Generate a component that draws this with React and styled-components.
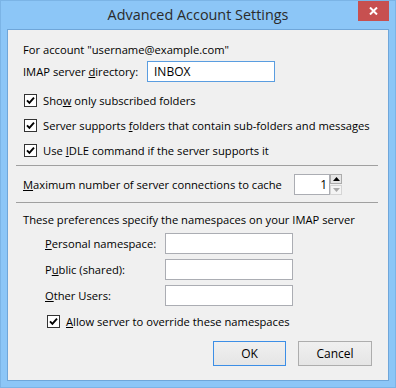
import React from "react";
import styled, { createGlobalStyle } from "styled-components";

const GlobalStyle = createGlobalStyle`
  html, body {
    margin: 0;
    padding: 0;
    background: #ffffff;
  }
  body {
    font-family: "Open Sans", "Noto Sans", sans-serif;
    font-size: 11.2px;
    color: #000;
  }
`;

const Window = styled.div`
  width: 396px;
  height: 388px;
  box-sizing: border-box;
  background: #8cc6f7;
  border: 1px solid #7bb4e6;
  padding: 0 6px 6px 6px;
  display: flex;
  flex-direction: column;
`;

const TitleBar = styled.div`
  position: relative;
  height: 28px;
  display: flex;
  align-items: center;
  justify-content: center;
  font-size: 14.4px;
  color: #2b2b2b;
  padding-bottom: 1px;
  box-sizing: border-box;
`;

const CloseButton = styled.div`
  position: absolute;
  top: 0;
  right: 0;
  width: 31px;
  height: 20px;
  background: #c75050;
  display: flex;
  align-items: center;
  justify-content: center;
`;

const Client = styled.div`
  flex: 1;
  background: #f0f0f0;
  border: 1px solid #6fa6d9;
  padding: 9px 10px 0 8px;
  display: flex;
  flex-direction: column;
`;

const Line = styled.div`
  height: ${(p) => p.$h || 20}px;
  display: flex;
  align-items: center;
  margin-top: ${(p) => p.$top || 0}px;
  padding-left: ${(p) => (p.$indent == null ? 7 : p.$indent)}px;
  white-space: nowrap;
`;

const Label = styled.span`
  width: ${(p) => p.$w}px;
  flex: none;
`;

const Field = styled.input`
  width: ${(p) => p.$w || 128}px;
  height: 21px;
  box-sizing: border-box;
  margin: 0;
  border: 1px solid ${(p) => (p.$focus ? "#5a9de0" : "#abadb3")};
  background: #fff;
  padding: 0 ${(p) => (p.$right ? 2 : 5)}px 0 ${(p) => (p.$right ? 2 : 6)}px;
  font: inherit;
  font-size: 12px;
  color: #000;
  outline: none;
  text-align: ${(p) => (p.$right ? "right" : "left")};
`;

const CheckList = styled.div`
  margin-top: 6px;
  display: flex;
  flex-direction: column;
`;

const CheckRow = styled.label`
  height: 25px;
  display: flex;
  align-items: center;
  gap: 6px;
  padding-left: ${(p) => p.$indent || 8}px;
  margin-top: ${(p) => p.$top || 0}px;
  white-space: nowrap;
`;

const Box = styled.span`
  width: 13px;
  height: 13px;
  box-sizing: border-box;
  border: 1px solid #333;
  background: #fff;
  display: flex;
  align-items: center;
  justify-content: center;
  flex: none;
`;

const Separator = styled.div`
  height: 1px;
  background: #a0a0a0;
  margin-top: ${(p) => p.$top}px;
`;

const Spinner = styled.div`
  display: flex;
`;

const SpinButtons = styled.div`
  display: flex;
  flex-direction: column;
  justify-content: space-between;
  width: 12px;
`;

const SpinButton = styled.div`
  height: 10px;
  box-sizing: border-box;
  border: 1px solid ${(p) => (p.$disabled ? "#d5d5d5" : "#acacac")};
  background: ${(p) => (p.$disabled ? "#f4f4f4" : "#e6e6e6")};
  display: flex;
  align-items: center;
  justify-content: center;
`;

const NamespaceGrid = styled.div`
  margin-top: 4px;
  display: grid;
  grid-template-columns: 120px 128px;
  row-gap: 5px;
  padding-left: 29px;
  align-items: center;
`;

const ButtonRow = styled.div`
  margin-top: 7px;
  display: flex;
  justify-content: flex-end;
  gap: 12px;
  padding-right: 6px;
`;

const Button = styled.button`
  width: ${(p) => p.$w}px;
  height: 25px;
  box-sizing: border-box;
  margin: 0;
  border: 1px solid ${(p) => (p.$default ? "#3c8ee6" : "#adadad")};
  background: linear-gradient(#f0f0f0, #e5e5e5);
  font: inherit;
  font-size: 12px;
  color: #000;
  padding: 0;
`;

const Check = () => (
  <Box>
    <svg width="9" height="9" viewBox="0 0 9 9">
      <polyline points="1,4.3 3.4,6.8 8,1.6" fill="none" stroke="#000" strokeWidth="1.9" />
    </svg>
  </Box>
);

const Triangle = ({ up, color }) => (
  <svg width="7" height="4" viewBox="0 0 7 4">
    <polygon points={up ? "0,4 7,4 3.5,0" : "0,0 7,0 3.5,4"} fill={color} />
  </svg>
);

const checks = [
  <>Sho<u>w</u> only subscribed folders</>,
  <>Server supports <u>f</u>olders that contain sub-folders and messages</>,
  <>Use <u>I</u>DLE command if the server supports it</>,
];

const namespaces = [
  <><u>P</u>ersonal namespace:</>,
  <>P<u>u</u>blic (shared):</>,
  <><u>O</u>ther Users:</>,
];

export default function App() {
  return (
    <>
      <GlobalStyle />
      <Window>
        <TitleBar>
          Advanced Account Settings
          <CloseButton>
            <svg width="9" height="8" viewBox="0 0 9 8">
              <path d="M1 0.5 L8 7.5 M8 0.5 L1 7.5" stroke="#fff" strokeWidth="2" />
            </svg>
          </CloseButton>
        </TitleBar>
        <Client>
          <Line>For account "username@example.com"</Line>
          <Line $h={21} $top={2}>
            <Label $w={124}>IMAP server <u>d</u>irectory:</Label>
            <Field $w={128} $focus defaultValue="INBOX" readOnly />
          </Line>
          <CheckList>
            {checks.map((c, i) => (
              <CheckRow key={i}>
                <Check />
                <span>{c}</span>
              </CheckRow>
            ))}
          </CheckList>
          <Separator $top={2} />
          <Line $h={21} $top={8}>
            <Label $w={271}><u>M</u>aximum number of server connections to cache</Label>
            <Spinner>
              <Field $w={36} $right defaultValue="1" readOnly />
              <SpinButtons>
                <SpinButton><Triangle up color="#000" /></SpinButton>
                <SpinButton $disabled><Triangle color="#a8a8a8" /></SpinButton>
              </SpinButtons>
            </Spinner>
          </Line>
          <Separator $top={7} />
          <Line $top={6}>These preferences specify the namespaces on your IMAP server</Line>
          <NamespaceGrid>
            {namespaces.map((n, i) => (
              <React.Fragment key={i}>
                <span>{n}</span>
                <Field $w={128} readOnly defaultValue="" />
              </React.Fragment>
            ))}
          </NamespaceGrid>
          <CheckRow $indent={31} $top={3}>
            <Check />
            <span><u>A</u>llow server to override these namespaces</span>
          </CheckRow>
          <ButtonRow>
            <Button $w={73} $default>OK</Button>
            <Button $w={74}>Cancel</Button>
          </ButtonRow>
        </Client>
      </Window>
    </>
  );
}
